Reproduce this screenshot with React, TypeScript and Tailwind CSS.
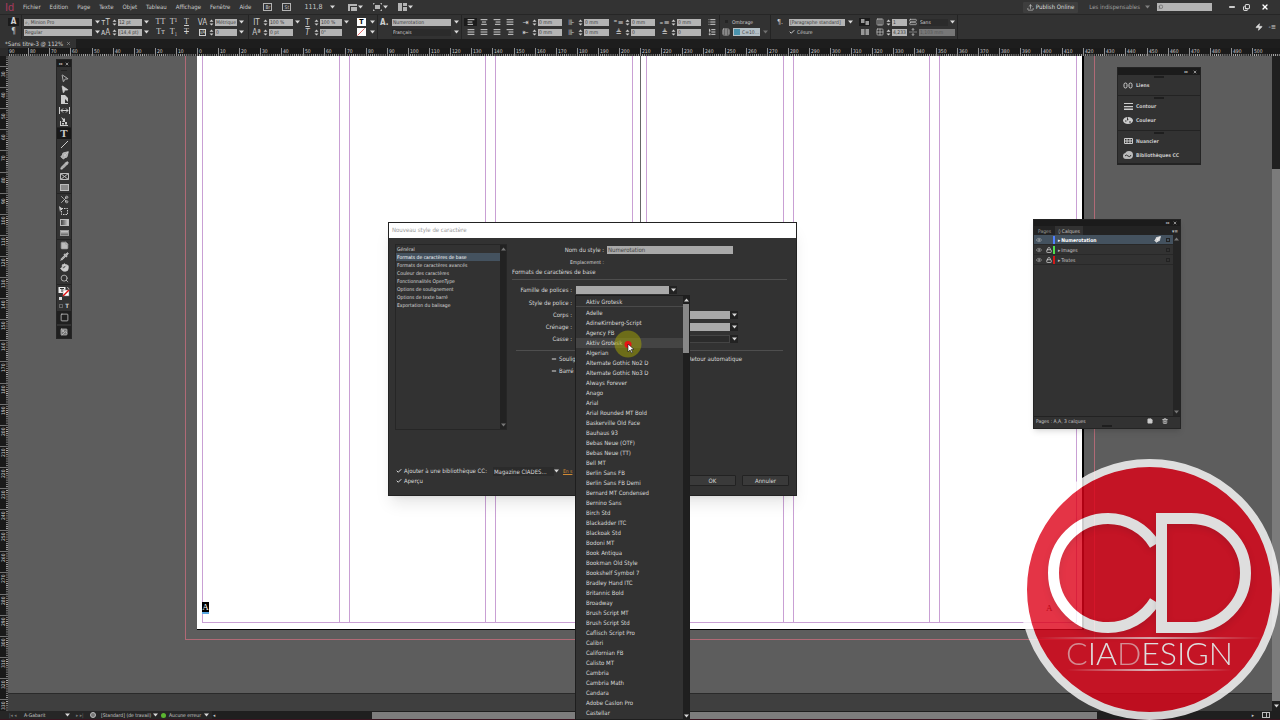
import React, { useState } from 'react';
import {
  AlignCenter, AlignLeft, AlignRight, AlignJustify, Check, Columns3, Copy, Grid2x2, Hand, List,
  ListOrdered, Lock, MousePointer2, Palette, PenTool, Pencil, Pipette, Scissors, Search, Slash, StickyNote, Table,
  Trash2, Upload, X, Zap, Eye, Cloud, Image, Square, Minus, StretchHorizontal, UnfoldVertical,
} from 'lucide-react';

const menus = ['Fichier', 'Edition', 'Page', 'Texte', 'Objet', 'Tableau', 'Affichage', 'Fenêtre', 'Aide'];

const fonts = [
  'Adelle', 'AdineKirnberg-Script', 'Agency FB', 'Aktiv Grotesk', 'Algerian', 'Alternate Gothic No2 D',
  'Alternate Gothic No3 D', 'Always Forever', 'Anago', 'Arial', 'Arial Rounded MT Bold', 'Baskerville Old Face',
  'Bauhaus 93', 'Bebas Neue (OTF)', 'Bebas Neue (TT)', 'Bell MT', 'Berlin Sans FB', 'Berlin Sans FB Demi',
  'Bernard MT Condensed', 'Bernino Sans', 'Birch Std', 'Blackadder ITC', 'Blackoak Std', 'Bodoni MT', 'Book Antiqua',
  'Bookman Old Style', 'Bookshelf Symbol 7', 'Bradley Hand ITC', 'Britannic Bold', 'Broadway', 'Brush Script MT',
  'Brush Script Std', 'Caflisch Script Pro', 'Calibri', 'Californian FB', 'Calisto MT', 'Cambria', 'Cambria Math',
  'Candara', 'Adobe Caslon Pro', 'Castellar',
];

const sections = [
  'Général', 'Formats de caractères de base', 'Formats de caractères avancés', 'Couleur des caractères',
  'Fonctionnalités OpenType', 'Options de soulignement', 'Options de texte barré', 'Exportation du balisage',
];

const layers = [
  { name: 'Numerotation', color: 'bg-[#4f80ff]', locked: false },
  { name: 'Images', color: 'bg-[#4fe04f]', locked: true },
  { name: 'Textes', color: 'bg-[#d01818]', locked: true },
];

const Caret: React.FC<{ className?: string }> = ({ className = 'fill-[#d8d8d8]' }) => (
  <svg viewBox="0 0 5 4" className={`h-[4px] w-[5px] shrink-0 ${className}`}><path d="M0 0.5h5L2.5 3.6z" /></svg>
);

const Spinner = () => (
  <svg viewBox="0 0 5 7" className="h-[7px] w-[5px] shrink-0 fill-[#cfcfcf]"><path d="M0.5 2.8h4L2.5 0.6zM0.5 4.4h4L2.5 6.6z" /></svg>
);

const Sep = () => <div className="mx-[2px] w-px self-stretch bg-[#242424]" />;

const inputClass = 'h-[7px] w-full min-w-0 bg-[#b4b4b4] px-px text-[5px] leading-[7px] text-[#3c3c3c]';

type NumProps = {
  icons: [React.ReactNode, React.ReactNode];
  values: [string, string];
  labels: [string, string];
  width: string;
  arrows?: [boolean, boolean];
};

const NumGroup: React.FC<NumProps> = ({ icons, values, labels, width, arrows }) => (
  <div className="flex flex-col gap-[3px]">
    {[0, 1].map((i) => (
      <label key={i} className="flex h-[7px] items-center">
        <span className="flex w-[11px] justify-center text-[8px] leading-[7px]">{icons[i]}</span>
        <span className="flex w-[7px] justify-center"><Spinner /></span>
        <span className={width}><input aria-label={labels[i]} defaultValue={values[i]} className={inputClass} /></span>
        {arrows && <span className="flex w-[9px] justify-center">{arrows[i] && <Caret />}</span>}
      </label>
    ))}
  </div>
);

const IconPair: React.FC<{ top: React.ReactNode; bottom: React.ReactNode; className?: string; on?: boolean; label: string }> = ({
  top, bottom, className = 'w-[13px]', on, label,
}) => (
  <div className={`flex flex-col gap-[2px] ${className}`}>
    <button aria-label={label} className={`flex h-[8px] items-center justify-center text-[8px] leading-[8px] ${on ? 'bg-[#1b1b1b]' : ''}`}>{top}</button>
    <button aria-label={`${label} 2`} className="flex h-[8px] items-center justify-center text-[8px] leading-[8px]">{bottom}</button>
  </div>
);

const MenuBar = () => (
  <header className="flex h-[14px] shrink-0 items-center bg-[#333333] pr-2 pl-[5px] text-[#cacaca]">
    <span className="w-[18px] font-['Liberation_Sans'] text-[11px] leading-[12px] text-[#a53a5c]">Id</span>
    <nav className="flex gap-[9px]">
      {menus.map((m) => <button key={m}>{m}</button>)}
    </nav>
    <div className="ml-[12px] flex items-center gap-[10px] text-[5px] leading-[6px]">
      <button className="h-[8px] w-[9px] border border-[#b4b4b4]">Br</button>
      <button className="h-[8px] w-[9px] border border-[#b4b4b4]">St</button>
    </div>
    <button className="ml-[13px] flex items-center gap-2 text-[7px] leading-[8px]">111,8 <Caret /></button>
    <div className="ml-[13px] flex items-center gap-[10px]">
      <button aria-label="Options d'affichage" className="flex items-center gap-px">
        <svg viewBox="0 0 9 8" className="h-[8px] w-[9px] fill-[#b4b4b4]"><path d="M0 1h9v2H0zM0 3h2v5H0zM3 4h6v4H3z" /></svg><Caret />
      </button>
      <button aria-label="Mode d'écran" className="flex items-center gap-px">
        <svg viewBox="0 0 9 8" className="h-[8px] w-[9px] fill-[#b4b4b4]"><path d="M2 2h5v4H2zM0 0h2L0 2zM9 0v2L7 0zM0 8V6l2 2zM9 8H7l2-2z" /></svg><Caret />
      </button>
      <button aria-label="Disposition" className="flex items-center gap-px">
        <svg viewBox="0 0 9 8" className="h-[8px] w-[9px] fill-[#b4b4b4]"><path d="M0 0h4v8H0zM5 0h4v3H5zM5 4h4v4H5z" /></svg><Caret />
      </button>
    </div>
    <button className="ml-auto flex h-[11px] items-center gap-[2px] rounded-[1px] bg-[#3e3e3e] px-1 text-[#dedede]"><Upload size={7} /> Publish Online</button>
    <button className="ml-[11px] flex items-center gap-[5px] text-[#a0a0a0]">Les indispensables <Caret className="fill-[#808080]" /></button>
    <label className="ml-[7px] flex h-[8px] w-[55px] items-center bg-[#b4b4b4] pl-px">
      <Search size={6} color="#444" className="-scale-x-100" /><input aria-label="Rechercher" className="w-full min-w-0" />
    </label>
    <div className="ml-[16px] flex items-center gap-[7px] pr-[3px] text-white">
      <button aria-label="Réduire"><Minus size={8} strokeWidth={4} /></button>
      <button aria-label="Restaurer"><Copy size={7} strokeWidth={3} className="-scale-x-100 rotate-180" /></button>
      <button aria-label="Fermer" className="pl-1"><X size={8} strokeWidth={4} /></button>
    </div>
  </header>
);

const ControlBar = () => (
  <div className="flex h-[25px] shrink-0 items-center border-t border-[#262626] bg-[#323232] pr-1 pl-[8px] text-[#cfcfcf]">
    <IconPair label="Caractère" className="w-[11px]" on top={<b>A</b>} bottom="¶" />
    <Sep />
    <div className="flex w-[76px] flex-col gap-[3px]">
      {['⌕, Minion Pro', 'Regular'].map((v, i) => (
        <div key={v} className="flex items-center gap-[3px]">
          <input aria-label={i ? 'Style' : 'Police'} defaultValue={v} className={inputClass} /><Caret />
        </div>
      ))}
    </div>
    <NumGroup icons={['тT', 'ᴀA']} values={['12 pt', '(14,4 pt)']} labels={['Corps', 'Interligne']} width="w-[24px]" arrows={[true, true]} />
    <div className="mr-[4px] ml-[3px] flex font-['Liberation_Serif']">
      <IconPair label="Capitales" top="TT" bottom="Tт" />
      <IconPair label="Exposant" top="T¹" bottom="T₁" />
      <IconPair label="Souligné" top={<u>T</u>} bottom={<s>T</s>} />
    </div>
    <NumGroup icons={['VA', <span className="border border-current text-[5px] leading-[5px]">VA</span>]} values={['Métrique', '0']} labels={['Crénage', 'Approche']} width="w-[22px]" arrows={[true, true]} />
    <Sep />
    <NumGroup icons={['IT', 'Aª']} values={['100 %', '0 pt']} labels={['Échelle verticale', 'Décalage']} width="w-[24px]" arrows={[true, false]} />
    <NumGroup icons={[<u>T</u>, <i>T</i>]} values={['100 %', '0°']} labels={['Échelle horizontale', 'Inclinaison']} width="w-[22px]" arrows={[true, false]} />
    <div className="ml-[6px] flex flex-col gap-[2px]">
      <button aria-label="Fond" className="flex items-center gap-1"><b className="h-[8px] w-[9px] bg-white text-[7px] leading-[8px] text-black">T</b><Caret /></button>
      <button aria-label="Contour" className="flex items-center gap-1"><span className="h-[8px] w-[9px] bg-white"><Slash size={8} color="#d22" className="-scale-x-100 rotate-90" /></span><Caret /></button>
    </div>
    <Sep />
    <div className="flex w-[79px] flex-col gap-[3px]">
      <div className="flex items-center gap-[3px]">
        <b className="w-[9px] shrink-0 text-[8px] leading-[7px]">A.</b>
        <input aria-label="Style de caractère" defaultValue="Numerotation" className={inputClass} /><Caret />
      </div>
      <div className="flex items-center gap-[3px]">
        <select aria-label="Langue" className="ml-[12px] h-[7px] w-full appearance-none bg-[#2b2b2b] px-px text-[5px] leading-[7px]"><option>Français</option></select><Caret />
      </div>
    </div>
    <Sep />
    <div className="flex">
      <IconPair label="Gauche" on top={<AlignLeft size={8} strokeWidth={3} />} bottom={<AlignJustify size={8} strokeWidth={3} />} />
      <IconPair label="Centre" top={<AlignCenter size={8} strokeWidth={3} />} bottom={<AlignJustify size={8} strokeWidth={3} />} />
      <IconPair label="Droite" top={<AlignRight size={8} strokeWidth={3} />} bottom={<AlignJustify size={8} strokeWidth={3} />} />
      <IconPair label="Dos" top={<AlignJustify size={8} strokeWidth={3} />} bottom={<AlignRight size={8} strokeWidth={3} />} />
    </div>
    <div className="ml-1 flex gap-[4px]">
      <NumGroup icons={['⇥', '⇤']} values={['0 mm', '0 mm']} labels={['Retrait gauche', 'Retrait première ligne']} width="w-[24px]" />
      <NumGroup icons={['⊪', '⊪']} values={['0 mm', '0 mm']} labels={['Retrait droit', 'Retrait dernière ligne']} width="w-[25px]" />
      <NumGroup icons={['⁼≡', '≜']} values={['0 mm', '0']} labels={['Espace avant', 'Lettrine']} width="w-[24px]" />
      <NumGroup icons={['₌≡', '≜']} values={['0 mm', '0']} labels={['Espace après', 'Caractères lettrine']} width="w-[24px]" />
    </div>
    <IconPair label="Listes" className="ml-[6px] w-[10px]" top={<List size={8} strokeWidth={3} />} bottom={<ListOrdered size={8} strokeWidth={3} />} />
    <Sep />
    <div className="flex w-[46px] flex-col gap-[3px]">
      <label className="flex h-[7px] items-center pl-[3px] text-[5px]"><input type="checkbox" className="mr-1 h-[3px] w-[3px] appearance-none bg-[#242424]" />Ombrage</label>
      <div className="flex items-center gap-[3px]">
        <Table size={8} className="shrink-0" />
        <button className="flex h-[8px] w-[28px] items-center gap-[2px] bg-[#b4c0c6] pl-px text-[5px] text-[#444]"><span className="h-[6px] w-[6px] bg-[#4a93ad]" />C=10…</button>
        <Caret className="fill-[#707070]" />
      </div>
    </div>
    <Sep />
    <div className="ml-[4px] flex w-[76px] flex-col gap-[3px]">
      <div className="flex items-center gap-[3px]">
        <span className="w-[9px] shrink-0 text-[7px] leading-[7px]">¶.</span>
        <input aria-label="Style de paragraphe" defaultValue="[Paragraphe standard]" className={inputClass} /><Caret />
      </div>
      <label className="ml-[12px] flex h-[7px] items-center gap-px text-[5px]"><Check size={6} strokeWidth={4} /><input type="checkbox" defaultChecked className="appearance-none" />Césure</label>
    </div>
    <IconPair
      label="Sens des colonnes"
      className="mr-[4px] ml-[6px] w-[11px]"
      on
      top={<svg viewBox="0 0 8 6" className="h-[6px] w-[8px] fill-[#999]"><path d="M0 0h3.500v4H0zM4.500 2H8v4H4.500z" /></svg>}
      bottom={<svg viewBox="0 0 8 6" className="h-[6px] w-[8px] fill-[#999]"><path d="M0 0h3.500v6H0zM4.500 0H8v6H4.500z" /></svg>}
    />
    <NumGroup icons={[<Columns3 size={8} />, <Grid2x2 size={8} />]} values={['1', '4,233']} labels={['Nombre de colonnes', 'Gouttière']} width="w-[15px]" />
    <div className="ml-[2px] flex w-[46px] flex-col gap-[3px]">
      <label className="flex h-[7px] items-center gap-[2px]">
        <StretchHorizontal size={8} className="shrink-0" />
        <select aria-label="Étendre" className="h-[7px] w-full appearance-none bg-[#2b2b2b] px-px text-[5px] leading-[7px]"><option>Sans</option></select><Caret />
      </label>
      <label className="flex h-[7px] items-center gap-[2px]">
        <UnfoldVertical size={8} className="shrink-0" />
        <input aria-label="Position" defaultValue="1,103 mm" className="h-[7px] w-full min-w-0 bg-[#777777] px-px text-[5px] leading-[7px] text-[#555]" />
      </label>
    </div>
    <Sep />
    <button aria-label="Application rapide" className="ml-auto"><Zap size={8} fill="#ddd" /></button>
    <button aria-label="Menu" className="ml-[5px] text-[7px] leading-[8px]">-≡</button>
  </div>
);

const TabBar = () => (
  <div className="flex h-[9px] shrink-0 bg-[#1d1d1d]">
    <div className="flex items-center gap-[3px] bg-[#323232] px-[5px] text-[#d4d4d4]">
      *Sans titre-3 @ 112%
      <button aria-label="Fermer l'onglet"><X size={5} color="#999" strokeWidth={3} /></button>
    </div>
  </div>
);

const hTicks = Array.from({ length: 60 }, (_, i) => i - 9);
const vTicks = Array.from({ length: 31 }, (_, i) => i + 3);

const HorizontalRuler = () => (
  <svg className="h-[8px] w-full shrink-0 bg-[#1a1a1a]">
    <defs>
      <pattern id="mm" x="197" width="2.11" height="8" patternUnits="userSpaceOnUse"><rect x="0" y="6" width="0.8" height="2" fill="#b0b0b0" /></pattern>
    </defs>
    <rect x="8" width="100%" height="8" fill="url(#mm)" />
    {hTicks.map((t) => (
      <g key={t} fill="#cdcdcd">
        <rect x={Math.round(197 + t * 21.1)} width="1" height="8" fill="#909090" />
        <text x={Math.round(197 + t * 21.1) + 2} y="5" fontSize="5">{Math.abs(t) * 10}</text>
      </g>
    ))}
    <rect width="8" height="8" fill="#2c2c2c" />
  </svg>
);

const VerticalRuler = () => (
  <svg className="h-full w-[8px] shrink-0 bg-[#1a1a1a]">
    <defs>
      <pattern id="mmv" y="8" width="8" height="2.11" patternUnits="userSpaceOnUse"><rect x="6" y="0" width="2" height="0.8" fill="#b0b0b0" /></pattern>
    </defs>
    <rect width="8" height="100%" fill="url(#mmv)" />
    {vTicks.map((t) => {
      const y = Math.round(10 + (t - 3) * 21.1);
      return (
        <g key={t} fill="#cdcdcd">
          <rect y={y} width="8" height="1" fill="#707070" />
          <text transform={`translate(5 ${y + 11}) rotate(-90)`} fontSize="5">{t * 10}</text>
        </g>
      );
    })}
  </svg>
);

const Columns = () => (
  <div className="flex flex-1 gap-[9px] border-b border-[#c9a0d4]">
    {[0, 1, 2].map((c) => <div key={c} className="flex-1 border-x border-[#c9a0d4]" />)}
  </div>
);

const Spread = () => (
  <div className="absolute top-0 left-[177px] h-[584px] w-[910px] border-x border-b border-[#b06a76]">
    <div className="mr-[10px] ml-[11px] flex h-[574px] border-r-2 border-b border-black bg-white">
      <div className="flex flex-1 border-r border-[#666] pr-[7px] pb-[6px] pl-[5px]"><Columns /></div>
      <div className="flex flex-1 pr-[5px] pb-[6px] pl-[5px]"><Columns /></div>
    </div>
    <span className="absolute top-[546px] left-[16px] w-[7px] border-b-2 border-[#5aa7e0] bg-black text-center font-['Liberation_Serif'] text-[9px] leading-[10px] text-white">A</span>
    <span className="absolute top-[547px] left-[860px] font-['Liberation_Serif'] text-[9px] leading-[10px] text-[#222]">A</span>
  </div>
);

type Tool = { name: string; icon: React.ReactNode; active?: boolean };

const toolGroups: { height: string; tools: Tool[] }[] = [
  {
    height: 'h-[55px]',
    tools: [
      { name: 'Sélection', icon: <MousePointer2 size={9} className="rotate-12" /> },
      { name: 'Sélection directe', icon: <MousePointer2 size={9} fill="#ccc" className="rotate-12" /> },
      { name: 'Page', icon: <svg viewBox="0 0 9 9" className="h-[9px] w-[9px] fill-[#ccc]"><path d="M1 0h4l3 3v6H1z" /><path d="M5 4l4 4H5z" fill="#323232" /></svg> },
      { name: 'Espace', icon: <svg viewBox="0 0 11 9" className="h-[9px] w-[11px] fill-none stroke-[#ccc]"><path d="M.5 1v7M10.500 1v7M2 4.500h7M4 2.500l-2 2 2 2M7 2.500l2 2-2 2" /></svg> },
      { name: 'Collecteur', icon: <svg viewBox="0 0 10 9" className="h-[9px] w-[10px] fill-[#ccc]"><path d="M1 4h1v4h7v1H1zM3 6h2v1.500H3zM6 5h2v2.500H6zM2 0l3 2 1-1v4H3l1-1.500z" /></svg> },
    ],
  },
  {
    height: 'h-[66px]',
    tools: [
      { name: 'Texte', icon: <b className="font-['Liberation_Serif'] text-[11px] leading-[10px]">T</b>, active: true },
      { name: 'Trait', icon: <svg viewBox="0 0 9 9" className="h-[9px] w-[9px] stroke-[#ccc]"><path d="M1 8L8 1" /></svg> },
      { name: 'Plume', icon: <PenTool size={9} fill="#aaa" className="rotate-90" /> },
      { name: 'Crayon', icon: <Pencil size={9} fill="#aaa" /> },
      { name: 'Bloc rectangulaire', icon: <svg viewBox="0 0 9 7" className="h-[7px] w-[9px] fill-none stroke-[#bbb]"><path d="M.5.5h8v6h-8zM.5.5l8 6M8.500.5l-8 6" /></svg> },
      { name: 'Rectangle', icon: <span className="h-[7px] w-[9px] border border-[#bbb] bg-[#8a8a8a]" /> },
    ],
  },
  {
    height: 'h-[46px]',
    tools: [
      { name: 'Ciseaux', icon: <Scissors size={9} className="rotate-180" /> },
      { name: 'Transformation', icon: <svg viewBox="0 0 10 9" className="h-[9px] w-[10px] fill-none stroke-[#ccc]"><path d="M2.500 2.500h6v6h-6z" strokeDasharray="1.500 1" /><path d="M0 0l4 3-2 .5L1 6z" fill="#ccc" stroke="none" /></svg> },
      { name: 'Nuance', icon: <span className="h-[7px] w-[9px] border border-[#bbb] bg-linear-to-r from-[#444] to-[#ccc]" /> },
      { name: 'Contour progressif', icon: <span className="h-[6px] w-[9px] border border-[#999] bg-linear-to-b from-[#ccc] to-[#666]" /> },
    ],
  },
  {
    height: 'h-[45px]',
    tools: [
      { name: 'Note', icon: <StickyNote size={9} fill="#bbb" stroke="#999" /> },
      { name: 'Pipette', icon: <Pipette size={9} fill="#aaa" /> },
      { name: 'Main', icon: <Hand size={9} fill="#ccc" /> },
      { name: 'Zoom', icon: <Search size={9} /> },
    ],
  },
];

const Toolbox = () => (
  <aside className="absolute top-[3px] left-[48px] w-[16px] border border-[#252525] bg-[#323232] text-[#ccc]">
    <div className="flex h-[7px] items-center justify-evenly bg-[#1c1c1c] text-[4px] leading-[7px]"><span>▸▸</span><X size={4} strokeWidth={4} /></div>
    <div className="mx-1 mt-[3px] mb-[2px] h-px bg-[#222]" />
    {toolGroups.map((g) => (
      <div key={g.height + g.tools[0].name} className={`flex flex-col border-b border-[#232323] ${g.height}`}>
        {g.tools.map((t) => (
          <button key={t.name} aria-label={t.name} className={`flex flex-1 items-center justify-center ${t.active ? 'bg-[#181818]' : ''}`}>{t.icon}</button>
        ))}
      </div>
    ))}
    <button aria-label="Fond et contour" className="flex h-[17px] w-full items-center justify-center">
      <svg viewBox="0 0 12 15" className="h-[15px] w-[12px]">
        <rect x="0.500" y="1" width="7" height="6" fill="#eee" /><path d="M2 2.500h4M4 2.500V6" stroke="#333" />
        <rect x="5" y="4" width="6" height="6" fill="#fff" stroke="#777" strokeWidth=".5" /><path d="M5 10l6-6" stroke="#d11" strokeWidth="1.500" />
        <path d="M9 1.500q2 0 2 2" fill="none" stroke="#aaa" /><rect x="1" y="11" width="3" height="3" fill="#ddd" />
      </svg>
    </button>
    <div className="flex h-[7px] items-center justify-around px-px text-[6px] leading-[7px]"><span className="h-[4px] w-[4px] border border-[#666]" /><b>T</b></div>
    <button aria-label="Mode normal" className="mt-[2px] flex h-[13px] w-full items-center justify-center bg-[#1f1f1f]"><Square size={9} /></button>
    <button aria-label="Mode écran" className="mt-[2px] flex h-[12px] w-full items-center justify-center bg-[#1f1f1f]"><Image size={8} fill="#777" /></button>
  </aside>
);

const Grip = () => <div className="mx-auto h-[2px] w-[10px] bg-[#1e1e1e]" />;

const DockPanel = () => {
  const groups = [
    [{ name: 'Liens', icon: <svg viewBox="0 0 10 7" className="h-[7px] w-[10px] fill-none stroke-[#ccc]"><rect x="1" y="1" width="3" height="5" rx="1.500" /><rect x="6" y="1" width="3" height="5" rx="1.500" /></svg> }],
    [
      { name: 'Contour', icon: <svg viewBox="0 0 9 7" className="h-[7px] w-[9px] fill-[#ccc]"><path d="M0 0h9v1H0zM0 3h9v1.300H0zM0 5.500h9V7H0z" /></svg> },
      { name: 'Couleur', icon: <svg viewBox="0 0 10 8" className="h-[8px] w-[10px] fill-[#ccc]"><ellipse cx="5" cy="4.500" rx="5" ry="3.500" /><path d="M4 0l1.500 4L4 4.500zM2 4.500h1.500v1H2zM6 5.500h2v1H6z" fill="#323232" /></svg> },
    ],
    [
      { name: 'Nuancier', icon: <svg viewBox="0 0 9 6" className="h-[6px] w-[9px] fill-none stroke-[#ccc]"><path d="M.5.5h8v5h-8zM.5 3h8M3 .5v5M6 .5v5" /></svg> },
      { name: 'Bibliothèques CC', icon: <svg viewBox="0 0 10 8" className="h-[8px] w-[10px]"><ellipse cx="6" cy="4" rx="4" ry="4" fill="#bbb" /><ellipse cx="3" cy="5" rx="3" ry="3" fill="#bbb" /><path d="M2 5q1-2 3 0t3-1" fill="none" stroke="#333" /></svg> },
    ],
  ];
  return (
    <aside className="absolute top-[11px] left-[1109px] w-[84px] border border-[#242424] bg-[#323232]">
      <div className="flex h-[7px] items-center justify-end gap-[5px] bg-[#1b1b1b] pr-[3px] text-[4px] leading-[7px] text-[#ccc]"><span>▸▸</span><X size={4} strokeWidth={4} /></div>
      {groups.map((g) => (
        <div key={g[0].name} className="border-b border-[#232323] pt-px pb-[3px] last:pb-px">
          <Grip />
          {g.map((i) => (
            <button key={i.name} className="flex h-[14px] items-center gap-[3px] pl-[5px] text-[5px] font-bold text-[#c6c6c6]">
              <span className="flex w-[10px] justify-center">{i.icon}</span>{i.name}
            </button>
          ))}
        </div>
      ))}
    </aside>
  );
};

const LayersPanel = () => {
  const [active, setActive] = useState('Numerotation');
  return (
    <aside className="absolute top-[163px] left-[1025px] flex h-[210px] w-[148px] flex-col border border-[#242424] bg-[#323232] text-[5px] leading-[6px] text-[#c6c6c6] shadow-md">
      <div className="flex h-[6px] items-center justify-end gap-[4px] bg-[#1b1b1b] pr-[3px] text-[4px] leading-[6px]"><span>◂◂</span><X size={4} strokeWidth={4} /></div>
      <div className="flex h-[9px] items-center bg-[#232323]">
        <button className="px-1 text-[#999]">Pages</button>
        <button className="h-full bg-[#323232] px-[3px]">◊ Calques</button>
        <button aria-label="Menu du panneau" className="ml-auto pr-[2px]">▾≡</button>
      </div>
      <div className="flex flex-1">
        <div className="flex-1">
          {layers.map((l) => (
            <div key={l.name} className={`flex h-[10px] items-center border-b border-[#282828] ${active === l.name ? 'bg-[#44525f] font-bold text-white' : ''}`}>
              <span className="flex w-[10px] justify-center"><Eye size={6} color="#bbb" /></span>
              <span className="flex w-[9px] justify-center">{l.locked && <Lock size={6} color="#ccc" strokeWidth={3} />}</span>
              <span className={`h-[8px] w-[2px] ${l.color}`} />
              <button onClick={() => setActive(l.name)} className="ml-[3px] flex-1 text-left"><span className="mr-px">▸</span>{l.name}</button>
              {active === l.name && <PenTool size={7} fill="#ccc" className="mr-[5px] rotate-90" />}
              <span className="mr-[3px] h-[4px] w-[4px] border border-[#222]" />
            </div>
          ))}
        </div>
        <div className="flex w-[7px] flex-col items-center justify-between bg-[#252525] py-[2px]">
          <Caret className="rotate-180 fill-[#777]" /><Caret className="fill-[#777]" />
        </div>
      </div>
      <div className="flex h-[9px] items-center border-t border-[#222] pr-[12px] pl-[2px]">
        Pages : A,A, 3 calques
        <button aria-label="Nouveau calque" className="ml-auto"><StickyNote size={6} fill="#ccc" /></button>
        <button aria-label="Supprimer le calque" className="ml-[9px]"><Trash2 size={6} strokeWidth={3} /></button>
      </div>
      <div className="h-[3px]"><Grip /></div>
    </aside>
  );
};

const FontMenu = () => (
  <div role="listbox" aria-label="Polices" className="absolute top-[72px] left-[186px] z-10 flex h-[425px] w-[115px] border border-[#1e1e1e] bg-[#323232]">
    <div className="flex-1">
      <button role="option" aria-selected="false" className="block h-[10px] w-full pl-[10px] text-left leading-[9px]">Aktiv Grotesk</button>
      <div className="mb-px h-px bg-[#4a4a4a]" />
      {fonts.map((f) => (
        <button key={f} role="option" aria-selected={f === 'Aktiv Grotesk'} className={`block h-[10px] w-full pl-[10px] text-left leading-[10px] ${f === 'Aktiv Grotesk' ? 'bg-[#444444]' : ''}`}>{f}</button>
      ))}
    </div>
    <div className="flex w-[6px] flex-col items-center bg-[#1f1f1f] pt-[2px] pb-px">
      <Caret className="mb-[2px] rotate-180 fill-[#d8d8d8]" />
      <div className="h-[49px] w-full bg-[#888888]" />
      <Caret className="mt-auto fill-[#d8d8d8]" />
    </div>
    <svg viewBox="0 0 30 30" className="pointer-events-none absolute top-[33px] left-[37px] h-[30px] w-[30px]">
      <circle cx="15" cy="15" r="13.500" fill="#a8a800" opacity=".5" />
      <circle cx="15" cy="15.500" r="3.500" fill="#e81414" />
      <path d="M15 15v8l2-2 1.500 3 1.200-.6-1.500-3H21z" fill="#fff" stroke="#111" strokeWidth=".6" />
    </svg>
  </div>
);

const fieldRows = [
  { id: 'corps', label: 'Corps :' },
  { id: 'crenage', label: 'Crénage :' },
  { id: 'casse', label: 'Casse :' },
];

const StyleDialog = () => {
  const [section, setSection] = useState(sections[1]);
  return (
    <div role="dialog" aria-label="Nouveau style de caractère" className="absolute top-[166px] left-[380px] h-[274px] w-[409px] border border-[#222] bg-[#323232] text-[#dadada] shadow-lg">
      <h2 className="h-[15px] bg-white pl-[3px] leading-[14px] text-[#9a9a9a]">Nouveau style de caractère</h2>
      <div className="flex pt-[6px] pl-[6px]">
        <div className="flex h-[186px] w-[112px] border border-[#262626] text-[5px] leading-[8px]">
          <div className="flex-1">
            {sections.map((s) => (
              <button key={s} onClick={() => setSection(s)} className={`block h-[8px] w-full pl-px text-left whitespace-nowrap ${s === section ? 'bg-[#44525f] text-white' : ''}`}>{s}</button>
            ))}
          </div>
          <div className="flex w-[6px] flex-col items-center justify-between bg-[#222] py-[2px]">
            <Caret className="rotate-180 fill-[#777]" /><Caret className="fill-[#777]" />
          </div>
        </div>
        <div className="flex-1 pt-px pr-[9px] pl-[5px]">
          <div className="flex h-[10px] items-center">
            <label htmlFor="nom" className="w-[92px] text-right">Nom du style :</label>
            <input id="nom" defaultValue="Numerotation" className="ml-[3px] h-[8px] w-[126px] bg-[#a9a9a9] px-px text-[#444]" />
          </div>
          <p className="mt-[3px] h-[8px] w-[92px] text-right text-[5px] leading-[8px]">Emplacement :</p>
          <h3 className="border-b border-[#4e4e4e] pt-px pb-[2px] leading-[10px]">Formats de caractères de base</h3>
          <div className="mt-[4px] flex h-[12px] items-center">
            <label htmlFor="famille" className="w-[60px] text-right">Famille de polices :</label>
            <input id="famille" className="ml-[4px] h-[8px] w-[93px] bg-[#a9a9a9]" />
            <span className="flex h-[8px] w-[8px] items-center justify-center bg-[#222]"><Caret /></span>
          </div>
          <div className="flex h-[13px] items-center"><span className="w-[60px] text-right">Style de police :</span></div>
          {fieldRows.map((r) => (
            <div key={r.id} className="flex h-[12px] items-center last-of-type:h-[13px]">
              <label htmlFor={r.id} className="w-[60px] text-right">{r.label}</label>
              {r.id === 'casse'
                ? <select id={r.id} className="ml-[4px] h-[8px] w-[154px] appearance-none border border-[#444] bg-[#2b2b2b]"><option>Normal</option></select>
                : <input id={r.id} className="ml-[4px] h-[8px] w-[154px] bg-[#a9a9a9]" />}
              <span className="flex h-[8px] w-[8px] items-center justify-center bg-[#222]"><Caret /></span>
            </div>
          ))}
          <div className="mx-1 mt-[5px] h-px bg-[#4e4e4e]" />
          <div className="mt-[2px] flex h-[12px] items-center pl-[39px]">
            <label className="flex items-center gap-px"><Minus size={6} strokeWidth={4} /><input type="checkbox" className="appearance-none" />Souligné</label>
            <label className="ml-auto flex items-center pr-[45px]"><input type="checkbox" className="appearance-none" />Retour automatique</label>
          </div>
          <label className="flex h-[12px] items-center gap-px pl-[39px]"><Minus size={6} strokeWidth={4} /><input type="checkbox" className="appearance-none" />Barré</label>
        </div>
      </div>
      <div className="mt-[36px] flex items-start pr-[7px] pl-[7px]">
        <div>
          <div className="flex h-[10px] items-center">
            <label className="flex items-center gap-px"><Check size={6} strokeWidth={4} /><input type="checkbox" defaultChecked className="appearance-none" />Ajouter à une bibliothèque CC:</label>
            <select aria-label="Bibliothèque" className="ml-[6px] h-[9px] w-[61px] appearance-none bg-[#2b2b2b] px-px leading-[9px]"><option>Magazine CIADES...</option></select>
            <Caret />
            <a href="#" aria-label="En savoir plus" className="ml-[4px] text-[5px] whitespace-nowrap text-[#d08a35] underline">En s</a>
          </div>
          <label className="flex h-[10px] items-center gap-px"><Check size={6} strokeWidth={4} /><input type="checkbox" defaultChecked className="appearance-none" />Aperçu</label>
        </div>
        <div className="mt-[9px] ml-auto flex gap-[6px]">
          <button className="h-[11px] w-[47px] rounded-[1px] border border-[#222] bg-[#3a3a3a]">OK</button>
          <button className="h-[11px] w-[47px] rounded-[1px] border border-[#222] bg-[#3a3a3a]">Annuler</button>
        </div>
      </div>
      <FontMenu />
    </div>
  );
};

const StatusBar = () => (
  <footer className="flex h-[9px] shrink-0 items-center border-b border-[#3a1420] bg-[#1f1f1f] text-[5px] leading-[7px] text-[#c8c8c8]">
    <div className="flex h-full w-[212px] shrink-0 items-center bg-[#262626] pl-[9px] whitespace-nowrap [&>*]:shrink-0">
      <span className="w-[9px] text-[#777]">|◂ ◂</span>
      <span className="ml-[6px] w-[41px]">A-Gabarit</span>
      <Caret />
      <span className="ml-[6px] w-[9px] text-[#777]">▸ ▸|</span>
      <span className="ml-[5px] h-[6px] w-[6px] rounded-full border border-[#bbb] bg-[#777]" />
      <span className="ml-[5px] w-[52px]">[Standard] (de travail)</span>
      <Caret />
      <span className="mx-[3px] h-[5px] w-[5px] rounded-full bg-[#5bb531]" />
      <span className="mr-[3px]">Aucune erreur</span>
      <Caret />
    </div>
    <span className="pl-[1px]">◂</span>
    <div className="flex flex-1 pl-[157px]"><div className="h-[7px] w-[725px] bg-[#7d7d7d]" /></div>
    <span className="pr-[8px]">▸</span>
    <span className="mr-[10px] flex h-[6px] w-[8px] border border-[#bbb]"><i className="mx-auto w-px bg-[#bbb]" /></span>
  </footer>
);

const Watermark = () => (
  <div className="pointer-events-none absolute right-0 bottom-0 h-[261px] w-[261px] rounded-full border-[8px] border-white bg-[#de0218] opacity-80" aria-label="CIADESIGN">
    <svg viewBox="0 0 120 120" className="absolute top-[46px] left-[21px] h-[120px] w-[120px] drop-shadow-md">
      <circle cx="60" cy="60" r="54.500" fill="none" stroke="#fff" strokeWidth="11" pathLength="360" strokeDasharray="298 62" strokeDashoffset="-31" />
    </svg>
    <div className="absolute top-[46px] left-[129px] h-[120px] w-[95px] rounded-r-[60px] border-[11px] border-white drop-shadow-md" />
    <div className="absolute top-[170px] left-[10px] h-[2px] w-[225px] bg-linear-to-r from-transparent via-white/70 to-transparent" />
    <p className="absolute top-[170px] left-0 w-full text-center font-['Lato'] text-[32px] leading-[32px] font-light text-white">
      <span className="text-white/60">C</span>IA<span className="text-white/60">D</span>ESIGN
    </p>
    <div className="absolute top-[202px] left-[40px] h-[2px] w-[165px] bg-linear-to-r from-transparent via-white/80 to-transparent" />
  </div>
);

const App: React.FC = () => (
  <div className="relative flex h-screen flex-col overflow-hidden bg-[#1d1d1d] font-['DejaVu_Sans_Condensed','DejaVu_Sans',sans-serif] text-[6px] leading-[8px]">
    <MenuBar />
    <ControlBar />
    <TabBar />
    <HorizontalRuler />
    <div className="flex min-h-0 flex-1">
      <VerticalRuler />
      <main className="relative flex flex-1 flex-col bg-[#5d5d5d]">
        <Spread />
        <div className="mt-auto h-[18px] border-t border-[#2a2a2a] bg-[#3f3f3f]" />
        <Toolbox />
        <DockPanel />
        <LayersPanel />
        <StyleDialog />
      </main>
      <div className="flex w-[8px] flex-col items-center bg-[#202020]">
        <div className="mt-[113px] w-full flex-1 bg-[#7b7b7b]" />
        <div className="flex h-[10px] items-center"><Caret /></div>
      </div>
    </div>
    <StatusBar />
    <Watermark />
  </div>
);

export default App;
